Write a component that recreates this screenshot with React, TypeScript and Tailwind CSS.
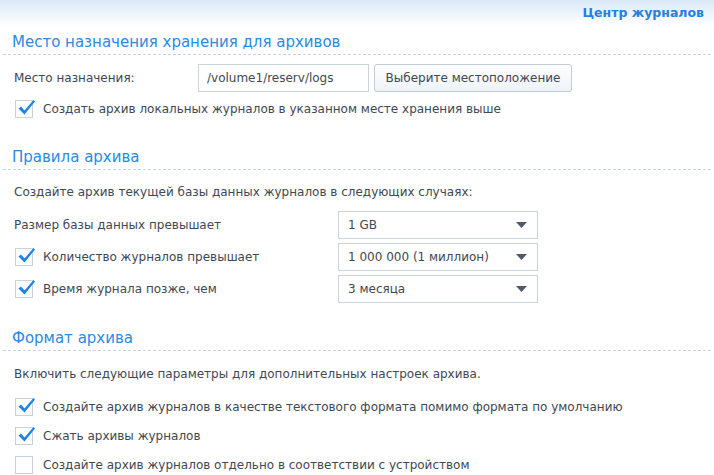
import React from 'react';

// Checkbox with the blue tick that pokes out of the box.
function Check({ checked }: { checked: boolean }) {
  return (
    <span className="relative inline-block w-[18px] h-[18px] shrink-0 border border-[#c8d2dc] bg-white">
      {checked && (
        <svg className="absolute left-[1px] top-[-2px] w-[19px] h-[17px]" viewBox="0 0 19 17">
          <path d="M1.5 9.5 L4 7.5 L7.5 11.5 L16.5 1 L18 2.5 L7.5 15.5 Z" fill="#1a84e8" />
        </svg>
      )}
    </span>
  );
}

function CheckRow({ checked, label }: { checked: boolean; label: string }) {
  return (
    <div className="flex items-center gap-[10px] pl-[15px] h-[18px]">
      <Check checked={checked} />
      <span>{label}</span>
    </div>
  );
}

function Select({ value }: { value: string }) {
  return (
    <div className="w-[200px] h-[28px] border border-[#ccd3db] bg-white flex items-center justify-between pl-[9px] pr-[10px]">
      <span>{value}</span>
      <svg className="w-[11px] h-[6px]" viewBox="0 0 11 6">
        <path d="M0 0 H11 L5.5 6 Z" fill="#505a64" />
      </svg>
    </div>
  );
}

function SectionTitle({ children }: { children: string }) {
  return (
    <div className="px-[3px]">
      <h2 className="pl-[9px] text-[15px] leading-[20px] text-[#2a8ae6] pb-[2px]">{children}</h2>
      <div className="border-t border-dashed border-[#c8d4e0]" />
    </div>
  );
}

export default function App() {
  return (
    <div
      className="w-[714px] h-[475px] overflow-hidden bg-white text-[12px] text-[#404852]"
      style={{ fontFamily: '"DejaVu Sans", Verdana, sans-serif' }}
    >
      {/* Заголовок окна */}
      <div className="h-[26px] bg-gradient-to-b from-[#dbe9f7] to-white flex justify-end pr-[10px] pt-[4px]">
        <span className="font-bold text-[12.5px] leading-[18px] text-[#2480e0]">Центр журналов</span>
      </div>

      <div className="mt-[6px]">
        <SectionTitle>Место назначения хранения для архивов</SectionTitle>
      </div>

      <div className="flex items-center mt-[9px] h-[28px]">
        <span className="pl-[14px] w-[198px]">Место назначения:</span>
        <div className="w-[171px] h-[28px] border border-[#ccd3db] flex items-center pl-[8px]">/volume1/reserv/logs</div>
        <button className="ml-[5px] w-[198px] h-[28px] rounded-[3px] border border-[#c3ccd6] bg-gradient-to-b from-white to-[#eef3f8] text-[#404852]">
          Выберите местоположение
        </button>
      </div>

      <div className="mt-[8px]">
        <CheckRow checked label="Создать архив локальных журналов в указанном месте хранения выше" />
      </div>

      <div className="mt-[29px]">
        <SectionTitle>Правила архива</SectionTitle>
      </div>

      <p className="pl-[14px] mt-[13px] leading-[18px]">Создайте архив текущей базы данных журналов в следующих случаях:</p>

      <div className="mt-[10px] flex flex-col gap-[4px]">
        <div className="flex items-center">
          <span className="pl-[14px] w-[338px]">Размер базы данных превышает</span>
          <Select value="1 GB" />
        </div>
        <div className="flex items-center">
          <div className="w-[338px]">
            <CheckRow checked label="Количество журналов превышает" />
          </div>
          <Select value="1 000 000 (1 миллион)" />
        </div>
        <div className="flex items-center">
          <div className="w-[338px]">
            <CheckRow checked label="Время журнала позже, чем" />
          </div>
          <Select value="3 месяца" />
        </div>
      </div>

      <div className="mt-[25px]">
        <SectionTitle>Формат архива</SectionTitle>
      </div>

      <p className="pl-[14px] mt-[14px] leading-[18px]">Включить следующие параметры для дополнительных настроек архива.</p>

      <div className="mt-[15px] flex flex-col gap-[11px]">
        <CheckRow checked label="Создайте архив журналов в качестве текстового формата помимо формата по умолчанию" />
        <CheckRow checked label="Сжать архивы журналов" />
        <CheckRow checked={false} label="Создайте архив журналов отдельно в соответствии с устройством" />
      </div>
    </div>
  );
}
